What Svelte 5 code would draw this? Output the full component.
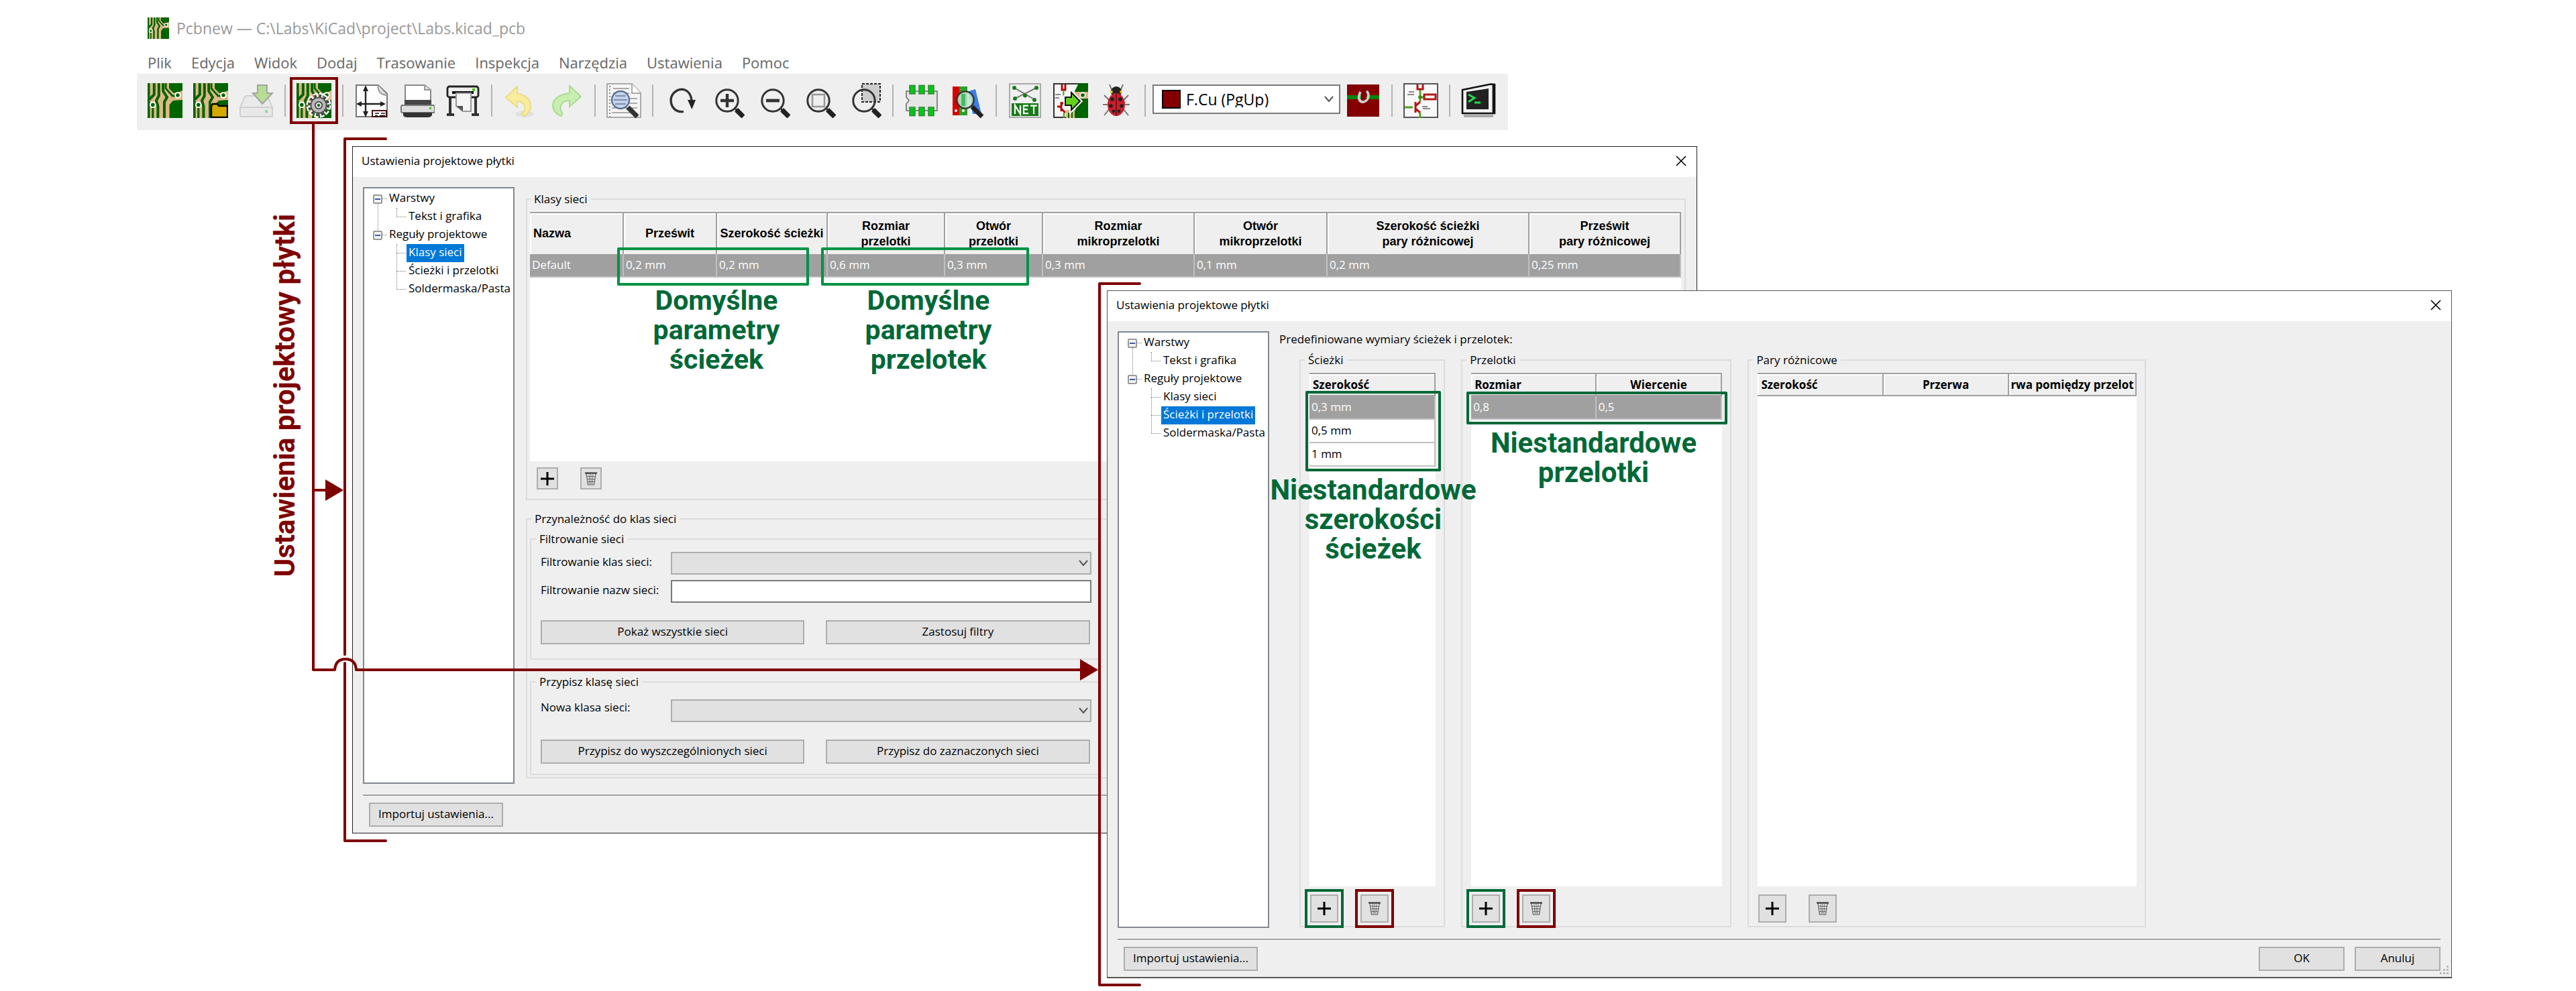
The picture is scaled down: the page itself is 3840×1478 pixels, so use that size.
<script>
  const menu = ['Plik', 'Edycja', 'Widok', 'Dodaj', 'Trasowanie', 'Inspekcja', 'Narzędzia', 'Ustawienia', 'Pomoc'];

  const toolsLeft = [
    ['new', 'Nowa płytka'], ['open', 'Otwórz płytkę'], ['save', 'Zapisz'], null,
    ['setup', 'Ustawienia projektowe płytki'], null,
    ['page', 'Ustawienia strony'], ['print', 'Drukuj'], ['plot', 'Rysuj'], null,
    ['undo', 'Cofnij'], ['redo', 'Ponów'], null,
    ['find', 'Znajdź'], null,
    ['refresh', 'Odśwież'], ['zoomin', 'Przybliż'], ['zoomout', 'Oddal'], ['zoomfit', 'Dopasuj'], ['zoomsel', 'Przybliż zaznaczenie'], null,
    ['chip', 'Edytor footprintów'], ['books', 'Przeglądarka footprintów'], null,
    ['net', 'Lista sieci'], ['update', 'Uaktualnij płytkę'], ['bug', 'Kontrola reguł projektowych'], null
  ];
  const toolsRight = [['layers', 'Para warstw'], null, ['schematic', 'Schemat'], null, ['console', 'Konsola skryptowa']];

  const tree = [
    { name: 'Warstwy', items: ['Tekst i grafika'] },
    { name: 'Reguły projektowe', items: ['Klasy sieci', 'Ścieżki i przelotki', 'Soldermaska/Pasta'] }
  ];

  const netClasses = {
    cols: [
      [140, 'Nazwa'], [139, 'Prześwit'], [165, 'Szerokość ścieżki'], [175, 'Rozmiar\nprzelotki'],
      [146, 'Otwór\nprzelotki'], [226, 'Rozmiar\nmikroprzelotki'], [198, 'Otwór\nmikroprzelotki'],
      [301, 'Szerokość ścieżki\npary różnicowej'], [226, 'Prześwit\npary różnicowej']
    ],
    rows: [['Default', '0,2 mm', '0,2 mm', '0,6 mm', '0,3 mm', '0,3 mm', '0,1 mm', '0,2 mm', '0,25 mm']]
  };

  const sizes = [
    { title: 'Ścieżki', marked: true, cols: [[187, 'Szerokość']], rows: [['0,3 mm'], ['0,5 mm'], ['1 mm']] },
    { title: 'Przelotki', marked: true, cols: [[187, 'Rozmiar'], [188, 'Wiercenie']], rows: [['0,8', '0,5']] },
    { title: 'Pary różnicowe', marked: false, cols: [[187, 'Szerokość'], [187, 'Przerwa'], [189, 'rwa pomiędzy przelot']], rows: [] }
  ];

  const share = (cols, w) => (100 * w) / cols.reduce((sum, c) => sum + c[0], 0);
</script>

{#snippet pcb()}
  <rect width="26" height="26" fill="#deb887" />
  <g fill="#006400">
    <path d="M0 0H1.800V26H0z" />
    <path d="M16 0H26V5.500L23.500 6.500L19.500 7.500L16 4z" />
    <path d="M16.300 26V16L19 13L26 12.500V26z" />
  </g>
  <g fill="none" stroke="#006400" stroke-width="2">
    <path d="M4.900 0V8.500L1.500 12" />
    <path d="M8.400 0V9.500L6.500 13L7.700 17V26" />
    <path d="M11.600 0V6L14.500 10.500L12.500 14V26" />
    <path d="M13.600 0V4L18.500 9.500H22" stroke-width="1.400" />
    <path d="M3.900 17V26" stroke-width="1.600" />
  </g>
  <circle cx="22.500" cy="9" r="1.900" fill="#006400" stroke="#fff" stroke-width="1" />
  <circle cx="3.900" cy="16.200" r="1.900" fill="#006400" stroke="#fff" stroke-width="1" />
{/snippet}

{#snippet lens()}
  <circle cx="13" cy="13" r="8.100" fill="none" stroke="#333" stroke-width="1.500" />
  <path d="M18.500 18.500L20.500 20.500" stroke="#333" stroke-width="1.500" />
  <path d="M19.800 19.800L25 25" stroke="#222" stroke-width="3.600" />
{/snippet}

{#snippet icon(name)}
  <svg class="icon" viewBox="0 0 26 26" aria-hidden="true">
    {#if name === 'new'}
      {@render pcb()}
    {:else if name === 'open'}
      {@render pcb()}
      <path d="M13.500 25.500V17l1-1.500h3.500l1 1.500h6.500v8.500z" fill="#d4aa00" stroke="#000" stroke-width="1.200" />
    {:else if name === 'save'}
      <path d="M1 18L5 9.500H21L25 18z" fill="#eaeaea" stroke="#d0d0d0" />
      <rect x="1" y="18" width="24" height="7" rx="1" fill="#e8e8e8" stroke="#cfcfcf" />
      <rect x="19.500" y="20" width="2" height="2.200" fill="#8fe08f" />
      <path d="M14 1.500h7v6h4L17.500 15.500 10.500 7.500h3.500z" fill="#b7dd93" stroke="#a3a3a3" />
    {:else if name === 'setup'}
      {@render pcb()}
      <circle cx="16.500" cy="16.500" r="7.600" fill="none" stroke="#fff" stroke-width="3.400" stroke-dasharray="3 .980" />
      <circle cx="16.500" cy="16.500" r="7" fill="none" stroke="#444" stroke-width="2.200" stroke-dasharray="1.800 1.865" />
      <circle cx="16.500" cy="16.500" r="5.800" fill="#bbb" stroke="#555" />
      <circle cx="16.500" cy="16.500" r="2.600" fill="#ddd" stroke="#555" />
      <circle cx="16.500" cy="16.500" r="1" fill="#006400" />
    {:else if name === 'page'}
      <path d="M1.500 1.500H18L24.500 8V25H1.500z" fill="#fff" stroke="#777" />
      <path d="M18 1.500C17 6 20 9 24.500 9" fill="#ddd" stroke="#999" />
      <path d="M8.500 4V23M3 15.500H22" stroke="#222" stroke-width="1.200" />
      <path d="M8.500 1.500l2 4.500h-4zM8.500 25.500l2-4.500h-4zM1.500 15.500l4-2v4zM23.500 15.500l-4-2v4z" fill="#222" />
      <rect x="13.500" y="20.500" width="10.500" height="4.500" fill="#fff" stroke="#411" />
      <path d="M15.500 22.500h3M20 22.500h3M15.500 24.300h2M19 24.300h4" stroke="#111" stroke-width=".8" />
    {:else if name === 'print'}
      <path d="M4 13V1.500H18.500L23 5V13z" fill="#fff" stroke="#888" />
      <path d="M18.500 1.500V5H23" fill="#ddd" stroke="#999" />
      <path d="M3.500 12.500h20v5h-20z" fill="#444" />
      <rect x="1" y="16.500" width="25" height="5.500" rx="1" fill="#ddd" stroke="#777" />
      <rect x="22" y="18" width="1.500" height="1.500" fill="#4c0" />
      <path d="M2.500 22h21.500v2q-1 1.500-3 1.500h-15.500q-2.500 0-3-1.500z" fill="#333" />
    {:else if name === 'plot'}
      <path d="M3.500 11V23M22.500 11V23M1 23.500H6.500M19.500 23.500H25" stroke="#333" stroke-width="2" />
      <rect x="1.500" y="2.500" width="23" height="8" rx="1.500" fill="#eee" stroke="#222" stroke-width="1.400" />
      <rect x="20" y="4" width="2" height="2" fill="#4c0" />
      <path d="M5 7h16" stroke="#111" stroke-width="2" />
      <path d="M8 7.500h11v13.500h-6l-5-4z" fill="#f4f4f4" stroke="#999" />
      <path d="M8 17l5 4v-4z" fill="#555" />
    {:else if name === 'undo'}
      <ellipse cx="16" cy="23" rx="7" ry="2.500" fill="#e2e2e2" />
      <path d="M2 10.500L10.500 2.500V7.500Q20.500 10 20.500 17 20.500 22 16 24.500 14.500 24.500 14 23 17.500 19 15.500 16 14 13.500 10.500 13.500V18z" fill="#f9ec9b" stroke="#ecdc86" />
    {:else if name === 'redo'}
      <path d="M24 10L15.500 2V7.500Q4 9 3 16 3 22 9 24.500 10.500 24 10 22.500 7.500 18 10 15 12 13 15.500 13V17.500z" fill="#c9efb0" stroke="#a9dc93" />
    {:else if name === 'find'}
      <path d="M.5 .5H19L25.500 7.500V25.500H.5z" fill="#f6f6f6" stroke="#aaa" />
      <path d="M19 .5V7.500H25.500" fill="#fff" stroke="#aaa" />
      <path d="M5 4h12M5 7.500h12M4 11.500h19M4 15h19M4 18.500h19M4 22h14" stroke="#aaa" />
      <path d="M2.500 2V25" stroke="#888" stroke-dasharray="1 1.500" />
      <circle cx="10.500" cy="12.500" r="6.500" fill="#c4d8f6" stroke="#607090" stroke-width="1.200" />
      <path d="M6.500 9.500h8M5.500 12.500h10M6.500 15.500h8" stroke="#8a93a5" stroke-width="1.200" />
      <path d="M16 18L23 25" stroke="#333" stroke-width="3.600" />
    {:else if name === 'refresh'}
      <path d="M14.500 21.200Q9 22 6.200 17.500 3.500 12 7 7.500 11 3.500 15.500 5 20 7 20.500 13" fill="none" stroke="#333" stroke-width="1.700" />
      <path d="M17.500 12.500h6l-2.800 7z" fill="#222" />
    {:else if name === 'zoomin'}
      {@render lens()}
      <path d="M13 8v10M8 13h10" stroke="#333" stroke-width="2.200" />
    {:else if name === 'zoomout'}
      {@render lens()}
      <path d="M8 13h10" stroke="#333" stroke-width="2.400" />
    {:else if name === 'zoomfit'}
      {@render lens()}
      <rect x="8.500" y="8.500" width="9" height="9" fill="none" stroke="#999" stroke-width="1.300" />
    {:else if name === 'zoomsel'}
      <rect x="11.500" y=".5" width="13.500" height="13.500" fill="#ccc" stroke="#222" stroke-dasharray="2 1" />
      {@render lens()}
    {:else if name === 'chip'}
      <path d="M1.500 6H24.500V20.500H1.500V15.500L3.500 13 1.500 10.500z" fill="#e6e6e6" stroke="#888" />
      <g fill="#00c814" stroke="#3b8a3b" stroke-width=".8">
        <rect x="4" y="1.700" width="4" height="6.300" /><rect x="11" y="1.700" width="4" height="6.300" /><rect x="18" y="1.700" width="4" height="6.300" />
        <rect x="4" y="18" width="4" height="6.300" /><rect x="11" y="18" width="4" height="6.300" /><rect x="18" y="18" width="4" height="6.300" />
      </g>
    {:else if name === 'books'}
      <rect x="2" y="2.500" width="5" height="21.500" fill="#d40000" />
      <rect x="7" y="2.500" width="6" height="21.500" fill="#2ca02c" />
      <path d="M14 6L19 4.500 23.500 23H17z" fill="#3a7fe8" />
      <circle cx="4.500" cy="20.500" r="1" fill="#fff" /><circle cx="10" cy="20.500" r="1" fill="#fff" />
      <circle cx="11.500" cy="12.500" r="6.300" fill="#c3e6cf" fill-opacity=".85" stroke="#333" stroke-width="1.200" />
      <path d="M8.500 8h3v9h-3z" fill="#48b868" />
      <path d="M16.500 17.500L24 25" stroke="#222" stroke-width="3.400" />
    {:else if name === 'net'}
      <rect x="1.500" y=".5" width="23" height="25" fill="#f0f0f0" stroke="#aaa" />
      <path d="M5 3.500L20.500 12.500M21.500 3.500L5.500 11.500" stroke="#777" />
      <g fill="#187a18"><circle cx="5" cy="3.500" r="1.500" /><circle cx="21.500" cy="3.500" r="1.500" /><circle cx="13" cy="9.200" r="1.500" /><circle cx="5.500" cy="11.500" r="1.500" /><circle cx="20" cy="12.500" r="1.500" /></g>
      <rect x="3" y="15" width="20" height="9.500" fill="#187a18" />
      <path d="M5.500 23v-6.500l4 6.500v-6.500M15.500 16.800h-3.500v5.800h3.500M12 19.600h3M17 16.800h5M19.500 16.800v6.200" fill="none" stroke="#fff" stroke-width="1.100" />
    {:else if name === 'update'}
      <rect x=".5" y=".5" width="25" height="25" fill="#f6f6f6" stroke="#333" />
      <path d="M19 0H26V26H14L19 13L16 6z" fill="#006400" />
      <path d="M16 6.500h10v5H16zM9.500 26v-6h6.500v6z" fill="#deb887" />
      <path d="M11.500 26v-4M14 26v-7" stroke="#006400" />
      <circle cx="22" cy="9" r="1.800" fill="#006400" stroke="#fff" stroke-width=".8" />
      <path d="M6.500 1v4h2.500V1M3 17.500h3M6 14v7M6 16l3-2.500M6 19l3 3" fill="none" stroke="#b00000" stroke-width="1.400" />
      <path d="M7.700 5v5M8 22v4" stroke="#3ca01e" />
      <path d="M1.500 8.500h4M1.500 11h3" stroke="#888" />
      <path d="M9 10.500h4.500V7L20 13.500 13.500 20v-3.500H9z" fill="#66d01a" stroke="#fff" stroke-width="3" />
      <path d="M9 10.500h4.500V7L20 13.500 13.500 20v-3.500H9z" fill="#66d01a" stroke="#111" />
    {:else if name === 'bug'}
      <path d="M8 1l2 5M18 1l-2 5M4 9l4 4M22 9l-4 4M3 16h5M23 16h-5M4 24l4-5M22 24l-4-5" stroke="#777" fill="none" />
      <circle cx="13" cy="6.500" r="4" fill="#222" />
      <path d="M9.500 5.500v2M16.500 5.500v2" stroke="#e8c000" stroke-width="1.500" />
      <ellipse cx="13" cy="16" rx="6.500" ry="8.500" fill="#c8202c" />
      <path d="M13 8v16" stroke="#7a0f16" />
      <g fill="#222"><circle cx="10" cy="12" r="1.500" /><circle cx="16" cy="12" r="1.500" /><circle cx="9" cy="17" r="1.400" /><circle cx="17" cy="17" r="1.400" /><circle cx="11" cy="21" r="1.200" /><circle cx="15" cy="21" r="1.200" /></g>
    {:else if name === 'layers'}
      <rect x="1" y="1" width="24" height="24" fill="#840000" />
      <path d="M1 10.500H25" stroke="#0a840a" stroke-width="3" />
      <path d="M11 6.500Q9.500 9 10 12 11 14.500 13.500 14 16.500 13 17 9.500 17 7 15.500 6" fill="none" stroke="#ccc" stroke-width="1.900" />
      <path d="M11.500 9h4v3h-4z" fill="#840000" />
    {:else if name === 'schematic'}
      <rect x=".5" y=".5" width="25" height="25" fill="#f8f8f8" stroke="#555" />
      <path d="M12.500 5v9M12.500 10.500h3M1 18h6M12.500 22v4" stroke="#4fa01e" stroke-width="1.400" />
      <path d="M10.500 1v3.500h4V1M15.500 8.500h8.500v3.500h-8.500zM9 14v8M9 17l3.500-3M9 19l3.500 3" fill="none" stroke="#b01818" stroke-width="1.500" />
      <circle cx="12.500" cy="10.500" r="1.400" fill="#3c8a14" />
      <path d="M4 6.500h4M3 8.500h5M14 17.500h4M14.500 19h5.500" stroke="#888" />
    {:else if name === 'console'}
      <path d="M2 24.500H24" stroke="#aaa" stroke-width="2" />
      <path d="M1 5L22 .8 25 1V22.500H1z" fill="#f2f2f2" stroke="#111" stroke-width="1.300" />
      <path d="M24 1.500V22" stroke="#111" stroke-width="1.400" />
      <path d="M4 6.500L20.500 4V19.500H4z" fill="#222" />
      <path d="M5.500 8.500l4.500 2.500-4.500 3M10 14.500h4.500" fill="none" stroke="#1de04a" stroke-width="1.500" />
    {/if}
  </svg>
{/snippet}

{#snippet tool(entry)}
  {#if entry}
    <button class="tool" class:marked={entry[0] === 'setup'} aria-label={entry[1]}>{@render icon(entry[0])}</button>
  {:else}
    <span class="divider"></span>
  {/if}
{/snippet}

{#snippet chevron()}
  <svg class="chevron" viewBox="0 0 16 16" aria-hidden="true"><path d="M2 4L8 11L14 4" fill="none" stroke="#555" stroke-width="2" /></svg>
{/snippet}

{#snippet titlebar()}
  <header class="titlebar">
    <h2>Ustawienia projektowe płytki</h2>
    <button class="close" aria-label="Zamknij">
      <svg viewBox="0 0 16 16" aria-hidden="true"><path d="M1 1L15 15M15 1L1 15" stroke="#000" stroke-width="1.600" /></svg>
    </button>
  </header>
{/snippet}

{#snippet nav(selected)}
  <ul class="tree">
    {#each tree as branch}
      <li class="branch">
        <div class="row">
          <button class="toggle" aria-label="Zwiń"></button>
          <span class="dots"></span>
          <button class="node">{branch.name}</button>
        </div>
        <ul>
          {#each branch.items as item}
            <li class="leaf"><button class="node" class:selected={item === selected}>{item}</button></li>
          {/each}
        </ul>
      </li>
    {/each}
  </ul>
{/snippet}

{#snippet grid(data)}
  <div class="sheet">
    <table>
      <colgroup>
        {#each data.cols as col}<col style="width: {share(data.cols, col[0])}%" />{/each}
      </colgroup>
      <thead>
        <tr>{#each data.cols as col}<th>{col[1]}</th>{/each}</tr>
      </thead>
      <tbody>
        {#each data.rows as row, i}
          <tr class:current={i === 0}>{#each row as cell}<td>{cell}</td>{/each}</tr>
        {/each}
      </tbody>
    </table>
  </div>
{/snippet}

{#snippet rowButtons(marked)}
  <div class="row-buttons">
    <button class="square" class:ring-add={marked} aria-label="Dodaj wiersz">
      <svg viewBox="0 0 20 20" aria-hidden="true"><path d="M10 0V20M0 10H20" stroke="#000" stroke-width="3" /></svg>
    </button>
    <button class="square" class:ring-delete={marked} aria-label="Usuń wiersz">
      <svg viewBox="0 0 20 20" aria-hidden="true">
        <path d="M3 2H17L14.500 19H5.500z" fill="#eee" stroke="#555" stroke-width="1.200" />
        <path d="M1 1.500H19" stroke="#333" stroke-width="2" />
        <path d="M7 3L8 18M10 3V18M13 3L12 18M3 6.500H17M4 10.500H16M5 14.500H15" fill="none" stroke="#666" />
      </svg>
    </button>
  </div>
{/snippet}

<div class="page">
  <header class="app-head">
    <div class="app-title">
      <svg class="logo" viewBox="0 0 26 26" aria-hidden="true">{@render pcb()}</svg>
      <h1>Pcbnew — C:\Labs\KiCad\project\Labs.kicad_pcb</h1>
    </div>
    <nav class="menu">
      {#each menu as item}<button>{item}</button>{/each}
    </nav>
  </header>

  <div class="toolbar">
    {#each toolsLeft as entry}{@render tool(entry)}{/each}
    <div class="drop layer">
      <span class="swatch"></span>
      <select aria-label="Warstwa"><option>F.Cu (PgUp)</option></select>
      {@render chevron()}
    </div>
    {#each toolsRight as entry}{@render tool(entry)}{/each}
  </div>

  <main class="stage">
    <section class="window first">
      {@render titlebar()}
      <div class="body">
        {@render nav('Klasy sieci')}
        <div class="content">
          <fieldset class="classes">
            <legend>Klasy sieci</legend>
            {@render grid(netClasses)}
            {@render rowButtons(false)}
          </fieldset>
          <fieldset class="members">
            <legend>Przynależność do klas sieci</legend>
            <div class="halves">
              <div>
                <fieldset class="form filter">
                  <legend>Filtrowanie sieci</legend>
                  <div class="fields">
                    <label for="class-filter">Filtrowanie klas sieci:</label>
                    <div class="drop"><select id="class-filter"></select>{@render chevron()}</div>
                    <label for="name-filter">Filtrowanie nazw sieci:</label>
                    <input id="name-filter" type="text" />
                  </div>
                  <div class="actions">
                    <button class="push">Pokaż wszystkie sieci</button>
                    <button class="push">Zastosuj filtry</button>
                  </div>
                </fieldset>
                <fieldset class="form assign">
                  <legend>Przypisz klasę sieci</legend>
                  <div class="fields">
                    <label for="new-class">Nowa klasa sieci:</label>
                    <div class="drop"><select id="new-class"></select>{@render chevron()}</div>
                  </div>
                  <div class="actions">
                    <button class="push">Przypisz do wyszczególnionych sieci</button>
                    <button class="push">Przypisz do zaznaczonych sieci</button>
                  </div>
                </fieldset>
              </div>
            </div>
          </fieldset>
        </div>
      </div>
      <footer><button class="push import">Importuj ustawienia...</button></footer>

      <div class="note tracks"><div class="frame"></div><p>Domyślne<br />parametry<br />ścieżek</p></div>
      <div class="note vias"><div class="frame"></div><p>Domyślne<br />parametry<br />przelotek</p></div>
    </section>

    <section class="window second">
      {@render titlebar()}
      <div class="body">
        {@render nav('Ścieżki i przelotki')}
        <div class="content">
          <p class="lead">Predefiniowane wymiary ścieżek i przelotek:</p>
          <div class="columns">
            {#each sizes as group}
              <fieldset class="sizes">
                <legend>{group.title}</legend>
                {@render grid(group)}
                {@render rowButtons(group.marked)}
              </fieldset>
            {/each}
          </div>
        </div>
      </div>
      <footer>
        <button class="push import">Importuj ustawienia...</button>
        <span class="spring"></span>
        <button class="push small">OK</button>
        <button class="push small">Anuluj</button>
      </footer>
      <svg class="grip" viewBox="0 0 14 14" aria-hidden="true">
        <path d="M10 0h3v3h-3zM5 5h3v3h-3zM10 5h3v3h-3zM0 10h3v3h-3zM5 10h3v3h-3zM10 10h3v3h-3z" fill="#bbb" />
      </svg>

      <div class="note tracks"><div class="frame"></div><p>Niestandardowe<br />szerokości<br />ścieżek</p></div>
      <div class="note vias"><div class="frame"></div><p>Niestandardowe<br />przelotki</p></div>
    </section>
  </main>

  <svg class="connectors" viewBox="0 0 3840 1478" preserveAspectRatio="none" aria-hidden="true">
    <g fill="none" stroke="#7f0000" stroke-width="4" stroke-linecap="round" stroke-linejoin="round">
      <path d="M467 185V999H499Q500 983 515 983Q530 983 531 999H1612" />
      <path d="M467 731H488" />
      <path d="M575 207H514V976M514 989V1254H575" />
      <path d="M1699 423H1639V1469H1699" />
    </g>
    <path d="M485 715L512 731L485 747zM1610 983L1637 999L1610 1015z" fill="#7f0000" />
  </svg>
  <p class="side-title">Ustawienia projektowy płytki</p>
</div>

<style>
  :global(body) { margin: 0; background: #fff; }
  .page {
    position: relative;
    font: 17px/24px "Open Sans", "Noto Sans", sans-serif;
    color: #000;
    overflow: hidden;
  }
  .page :is(h1, h2, p, ul) { margin: 0; padding: 0; font-weight: 400; list-style: none; }
  button, select, input { font: inherit; color: inherit; box-sizing: border-box; margin: 0; }
  button { background: none; border: 0; padding: 0; }
  select { appearance: none; }
  svg { display: block; }

  .app-head { padding: 26px 0 0 220px; }
  .app-title { display: flex; gap: 11px; align-items: center; }
  .logo { width: 32px; height: 32px; }
  .page h1 { font-size: 23px; line-height: 32px; color: #999; }
  .menu { display: flex; gap: 29px; padding: 20px 0 2px; font-size: 22px; line-height: 30px; color: #666; }

  .toolbar {
    box-sizing: border-box;
    display: flex;
    align-items: center;
    width: fit-content;
    height: 84px;
    margin-left: 204px;
    padding: 0 10px 4px 8px;
    background: #efefef;
  }
  .tool { display: flex; justify-content: center; align-items: center; width: 68px; height: 66px; }
  .tool.marked { outline: 4px solid #7f0000; outline-offset: -2px; }
  .icon { width: 52px; height: 52px; }
  .divider { width: 2px; height: 48px; margin: 0 8px; background: #b4b4b4; }

  .drop { position: relative; display: flex; }
  .drop select { width: 100%; height: 34px; background: #e1e1e1; border: 2px solid #adadad; border-radius: 0; padding: 0 32px 0 8px; }
  .chevron { position: absolute; right: 4px; top: 50%; width: 16px; height: 16px; margin-top: -8px; }
  .drop.layer { width: 280px; margin: 0 0 4px 2px; font-size: 23px; }
  .layer select { height: 44px; background: #fff; border-color: #7a7a7a; padding-left: 48px; }
  .layer .chevron { right: 9px; }
  .swatch { position: absolute; left: 14px; top: 8px; width: 24px; height: 24px; border: 2px solid #000; background: #840000; }

  .stage {
    display: grid;
    grid-template-columns: 525fr 1125fr 880fr 1125fr 185fr;
    align-items: start;
    padding: 24px 0 19px;
  }
  .window { position: relative; border: 1px solid #222; background: #efefef; }
  .first { grid-area: 1 / 2 / 2 / 4; }
  .second { grid-area: 1 / 3 / 2 / 5; margin-top: 215px; border-color: #555; border-bottom-width: 2px; }

  .titlebar { box-sizing: border-box; display: flex; justify-content: space-between; align-items: center; height: 45px; padding: 0 15px 3px 13px; background: #fff; }
  .page h2 { font-size: 17px; line-height: 24px; }
  .close svg { width: 16px; height: 16px; }

  .body { display: flex; gap: 17px; padding: 15px 16px 16px 15px; }
  .second .body { gap: 15px; }
  .content { flex: 1; min-width: 0; }

  .tree { box-sizing: border-box; width: 226px; min-height: 890px; flex: none; border: 2px solid #828790; background: #fff; }
  .page .tree { padding-top: 2px; }
  .branch { position: relative; }
  .row { display: flex; align-items: center; height: 27px; padding-left: 13px; }
  .toggle {
    width: 14px;
    height: 14px;
    border: 2px solid #999;
    border-radius: 2px;
    background: linear-gradient(#3b5aa8, #3b5aa8) center / 8px 2px no-repeat, #f4f4f4;
  }
  .dots { width: 7px; height: 0; border-top: 1px dotted #777; }
  .branch:first-child::after { content: ""; position: absolute; left: 20px; top: 21px; bottom: -6px; border-left: 1px dotted #777; }
  .node { display: block; height: 27px; padding: 0 3px 3px; line-height: 24px; white-space: nowrap; text-align: left; }
  .selected { background: #0078d7; color: #fff; }
  .leaf { position: relative; padding-left: 63px; }
  .leaf::before { content: ""; position: absolute; left: 48px; top: -13px; width: 13px; height: 26px; border: 1px dotted #777; border-width: 0 0 1px 1px; }
  .leaf:first-child::before { top: 0; height: 13px; }

  fieldset { min-width: 0; margin: 0; border: 2px solid #dcdcdc; }
  legend { height: 24px; margin-left: 6px; padding: 0 5px; }

  .classes { margin-top: 6px; padding: 7px 5px 14px 4px; }
  .classes legend { margin-left: 1px; }
  .members { margin: 16px 0 0; padding: 6px 4px 3px; }
  .members legend { margin-left: 2px; }
  .halves { display: grid; grid-template-columns: 1fr 1fr; gap: 20px; }
  .form { padding: 7px 10px 21px 14px; }
  .form legend { margin-left: -7px; }
  .assign { margin-top: 21px; padding: 14px 10px 15px 14px; }
  .fields { display: grid; grid-template-columns: 194px 1fr; gap: 8px 0; line-height: 30px; }
  .assign .fields { line-height: 24px; }
  input { width: 100%; height: 34px; border: 2px solid #7a7a7a; background: #fff; padding: 0 6px; }
  .actions { display: grid; grid-template-columns: 1fr 1fr; gap: 32px; padding: 26px 2px 0 0; }
  .push { height: 36px; background: #e1e1e1; border: 2px solid #adadad; padding-bottom: 2px; line-height: 24px; white-space: nowrap; }

  .sheet { height: 372px; background: #fff; }
  .second .sheet { height: 766px; }
  table { width: 100%; table-layout: fixed; border-collapse: separate; border-spacing: 0; }
  th {
    box-sizing: border-box;
    height: 63px;
    padding: 0;
    border: 0 solid #a0a0a0;
    border-width: 2px 2px 0 0;
    background: #efefef;
    box-shadow: inset 2px 2px #fff;
    font: bold 18px/23px "Liberation Sans", sans-serif;
    white-space: pre;
    overflow: hidden;
  }
  th:first-child { text-align: left; padding-left: 5px; }
  .second th { height: 35px; border-bottom-width: 2px; font: bold 17px/24px "Open Sans", sans-serif; }
  td { box-sizing: border-box; height: 35px; padding: 0 3px 1px; border: 0 solid #c0c0c0; border-width: 0 2px 2px 0; white-space: nowrap; }
  .current td { background: #a0a0a0; color: #fff; }

  .row-buttons { display: flex; gap: 33px; padding: 9px 0 0 10px; }
  .square { display: flex; align-items: center; justify-content: center; width: 32px; height: 33px; background: #e1e1e1; border: 2px solid #adadad; }
  .square svg { width: 20px; height: 20px; flex: none; }
  .second .row-buttons { padding: 12px 0 0 1px; }
  .second .square { width: 42px; height: 42px; }
  .ring-add { outline: 4px solid #006837; outline-offset: 4px; }
  .ring-delete { outline: 4px solid #7f0000; outline-offset: 4px; }

  .page .lead { padding-bottom: 7px; }
  .columns { display: grid; grid-template-columns: 217fr 403fr 593fr 415fr; gap: 24px; padding-left: 30px; }
  .sizes { padding: 7px 12px 5px 13px; }
  .sizes legend { margin-left: -7px; }

  footer { display: flex; gap: 15px; margin: 0 16px 0 15px; padding: 10px 0 9px 9px; border-top: 2px solid #a0a0a0; box-shadow: inset 0 1px #fff; }
  .import { width: 200px; }
  .small { width: 128px; }
  .spring { flex: 1; }
  .grip { position: absolute; right: 3px; bottom: 3px; width: 14px; height: 14px; }

  .note { position: absolute; display: flex; flex-direction: column; align-items: center; color: #006837; }
  .frame { box-sizing: border-box; width: 100%; border: 4px solid #009245; border-radius: 2px; }
  .page .note p { font: bold 41px/44px Roboto, sans-serif; text-align: center; }
  .first .note { top: 150px; }
  .page .first .note p { padding-left: 10px; }
  .first .frame { height: 57px; }
  .first .tracks { left: 394px; width: 286px; }
  .first .vias { left: 698px; width: 310px; }
  .second .frame { border-color: #006837; margin-bottom: 6px; }
  .page .second .note p { font-size: 42px; }
  .second .tracks { left: 295px; top: 149px; width: 202px; }
  .second .tracks .frame { height: 120px; }
  .second .vias { left: 535px; top: 150px; width: 389px; }
  .page .second .vias p { padding-right: 10px; }
  .second .vias .frame { height: 49px; }

  .connectors { position: absolute; inset: 0; width: 100%; height: 100%; pointer-events: none; }
  .page .side-title {
    position: absolute;
    left: 401px;
    top: 319px;
    writing-mode: vertical-rl;
    rotate: 180deg;
    font: bold 42px/48px Roboto, sans-serif;
    color: #7f0000;
    white-space: nowrap;
  }
</style>
